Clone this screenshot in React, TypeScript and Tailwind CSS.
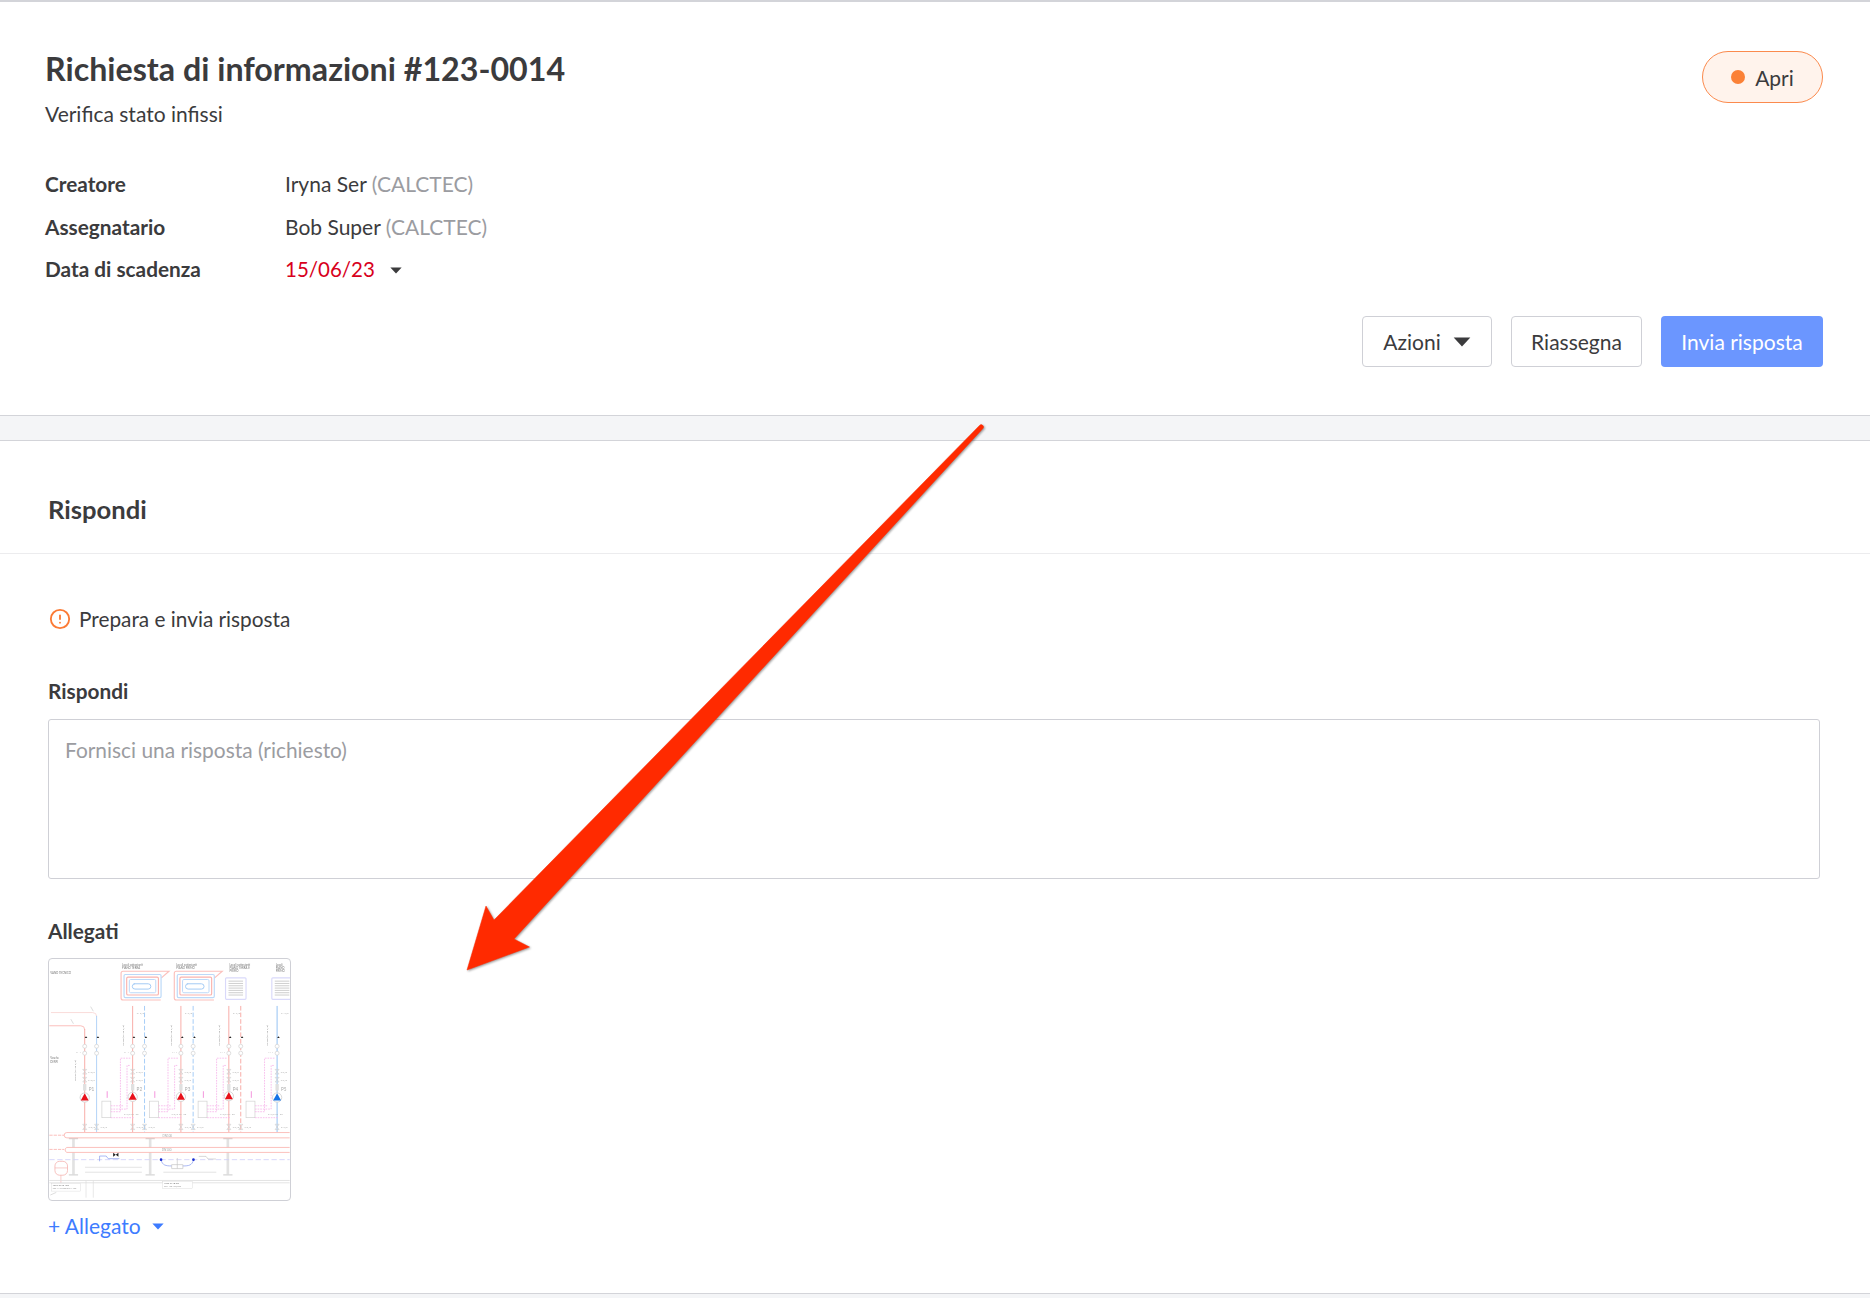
import React from "react";
import { CircleAlert } from "lucide-react";

const Caret = ({ className }: { className: string }) => (
  <svg viewBox="0 0 16 9" className={className} fill="currentColor">
    <path d="M0.5 0.5h15L8 8.5z" />
  </svg>
);

const Row = ({ label, children }: { label: string; children: React.ReactNode }) => (
  <div className="flex items-center h-[24px]">
    <div className="w-[240px] font-bold text-[20.8px]">{label}</div>
    <div className="flex items-center">{children}</div>
  </div>
);

// schema dell'allegato, coordinate prese dallo zoom 3x
const Schema = () => {
  const pipes = [
    { x: 162, top: 240, color: "#f79c96", dash: "" },
    { x: 198, top: 200, color: "#a3caf5", dash: "" },
    { x: 307, top: 170, color: "#f79c96", dash: "" },
    { x: 343, top: 170, color: "#94c2f5", dash: "14 6" },
    { x: 453, top: 170, color: "#f79c96", dash: "" },
    { x: 490, top: 170, color: "#94c2f5", dash: "14 6" },
    { x: 598, top: 170, color: "#f79c96", dash: "" },
    { x: 634, top: 170, color: "#f79c96", dash: "14 6" },
    { x: 744, top: 170, color: "#7fb6f2", dash: "" },
  ];
  const pumps = [
    { x: 162, y: 447, color: "#e8101a" },
    { x: 307, y: 445, color: "#e8101a" },
    { x: 453, y: 445, color: "#e8101a" },
    { x: 598, y: 443, color: "#e8101a" },
    { x: 744, y: 447, color: "#1473e6" },
  ];
  const boxes = [214, 358, 505, 650];
  const loops = [272, 433];
  const small = "Lato, sans-serif";

  return (
    <svg viewBox="55 28 727 729" className="w-full h-full blur-[0.6px]" fill="none">
      <g fontSize="8.5" fill="#777" fontFamily={small}>
        <text x={275} y={48}>Locali sottostanti<tspan x={275} dy="9">PIANO TERRA</tspan></text>
        <text x={439} y={48}>Locali sottostanti<tspan x={439} dy="9">PIANO PRIMO</tspan></text>
        <text x={600} y={48}>Locali sottostanti<tspan x={600} dy="9">PIANO TERRA E</tspan><tspan x={600} dy="9">PRIMO</tspan></text>
        <text x={740} y={48}>Locali<tspan x={740} dy="9">PIANO</tspan><tspan x={740} dy="9">PRIMO</tspan></text>
        <text x={58} y={73}>VANO TECNICO</text>
        <text x={58} y={332}>Vasche</text>
        <text x={58} y={342}>DMW</text>
      </g>

      {loops.map((x) => (
        <g key={x}>
          <path d={`M${x + 120} 152H${x + 6}a6 6 0 0 1-6-6V71a6 6 0 0 1 6-6H${x + 145}L${x + 122} 85`} stroke="#fbc0bc" strokeWidth="3.5" />
          <rect x={x + 9} y={75} width={112} height={70} rx="4" stroke="#bcd9f8" strokeWidth="3.5" />
          <rect x={x + 17} y={83} width={96} height={54} rx="4" stroke="#fab3ae" strokeWidth="3.5" />
          <rect x={x + 25} y={90} width={80} height={40} rx="4" stroke="#bcd9f8" strokeWidth="3" />
          <path d={`M${x + 38} 103h44a8 8 0 0 1 0 16h-40a8 8 0 0 1 0-16`} stroke="#a3caf5" strokeWidth="3" />
        </g>
      ))}
      {[588, 728].map((x) => (
        <g key={x}>
          <rect x={x} y={85} width={62} height={65} rx="3" stroke="#d9d9fa" strokeWidth="3.5" />
          {[95, 102, 109, 116, 123, 130, 137].map((y) => (
            <path key={y} d={`M${x + 9} ${y}h44`} stroke="#c4c4c4" strokeWidth="2.5" />
          ))}
        </g>
      ))}

      <path d="M55 230H150a12 12 0 0 1 12 12" stroke="#fab3ae" strokeWidth="2.5" />
      <path d="M60 190H186a12 12 0 0 1 12 12" stroke="#f9d6d3" strokeWidth="2.5" />
      <path d="M180 172l8 14M120 210l8 14" stroke="#ccc" strokeWidth="2" />

      {pipes.map((p) => (
        <g key={p.x}>
          <path d={`M${p.x} ${p.top}V552`} stroke={p.color} strokeWidth="2.5" strokeDasharray={p.dash} />
          <path d={`M${p.x + 4} 262l4 5h-8z`} fill="#222" />
          {[292, 313].map((y) => (
            <circle key={y} cx={p.x} cy={y} r="6" fill="#fff" stroke="#cfcfcf" strokeWidth="2" />
          ))}
          <path d={`M${p.x - 6} 528l12 16h-12l12-16z`} stroke="#cfcfcf" strokeWidth="2" />
          <text x={p.x + 11} y={540} fontSize="8" fill="#aaa" fontFamily={small}>1"1/2</text>
        </g>
      ))}

      {[307, 453, 598, 744].map((x) => (
        <text key={x} x={x + 12} y={194} fontSize="8" fill="#aaa" fontFamily={small}>1" 1/2</text>
      ))}

      {[162, 307, 453, 598, 744].map((x) => (
        <g key={x}>
          <text
            x={x - 26}
            y={x === 162 ? 396 : 290}
            fontSize="8"
            fill="#888"
            fontFamily={small}
            transform={`rotate(-90 ${x - 26} ${x === 162 ? 396 : 290})`}
          >
            DN50 (H=45 1/2)
          </text>
          <path d={`M${x - 6} 362l12 14h-12l12-14zM${x - 6} 386l12 14h-12l12-14z`} stroke="#cfcfcf" strokeWidth="2" />
          <text x={x + 10} y={373} fontSize="8" fill="#aaa" fontFamily={small}>1"1/2</text>
          <text x={x + 10} y={396} fontSize="8" fill="#aaa" fontFamily={small}>1"1/2</text>
          <rect x={x - 5} y={406} width={10} height={20} fill="#e0e0e0" />
          <text x={x - 26} y={312} fontSize="7" fill="#aaa" fontFamily={small}>M=1</text>
        </g>
      ))}

      {boxes.map((x) => (
        <g key={x}>
          <rect x={x} y={458} width={27} height={50} fill="#fff" stroke="#cfcfcf" strokeWidth="2" />
          <path d={`M${x + 16} 428v20`} stroke="#f27fd6" strokeWidth="2.5" />
          <path
            d={`M${x + 27} 490h29V328h30M${x + 27} 482h49V350h10M${x + 27} 472h40M${x + 27} 508h70`}
            stroke="#f6b4e9"
            strokeWidth="2.5"
            strokeDasharray="5 3"
          />
          <text x={x + 66} y={500} fontSize="8" fill="#aaa" fontFamily={small}>1"1/2 Kv=25</text>
        </g>
      ))}

      {pumps.map((p, i) => (
        <g key={p.x}>
          <circle cx={p.x} cy={p.y} r="14" fill="#fff" stroke="#cfcfcf" strokeWidth="2.5" />
          <path d={`M${p.x} ${p.y - 13}L${p.x + 12} ${p.y + 9}H${p.x - 12}z`} fill={p.color} />
          <text x={p.x + 12} y={426} fontSize="14" fill="#aaa" fontFamily={small}>P{i + 1}</text>
        </g>
      ))}

      {[128, 360, 595].map((x) => (
        <g key={x}>
          <path d={`M${x} 570V680`} stroke="#e2e2e2" strokeWidth="8" />
          <path d={`M${x - 14} 571h28M${x - 14} 681h28`} stroke="#d6d6d6" strokeWidth="4" />
        </g>
      ))}
      <path d="M55 561h45M55 604h45" stroke="#fab3ae" strokeWidth="2.5" strokeDasharray="10 3" />
      <path d="M782 553H108a8 8 0 0 0 0 16H782" fill="#fff" stroke="#fab3ae" strokeWidth="2.5" />
      <path d="M782 598H108a8 8 0 0 0 0 15H782" fill="#fff" stroke="#fab3ae" strokeWidth="2.5" />
      <text x={397} y={565} fontSize="9" fill="#aaa" fontFamily={small}>DN100</text>
      <text x={395} y={609} fontSize="9" fill="#aaa" fontFamily={small}>DN100</text>
      <path d="M55 635H782" stroke="#d0d0fa" strokeWidth="2.5" strokeDasharray="16 8" />

      <path d="M207 640v-16h20l6 8h34M393 636c4 16 14 18 32 18M491 636c-4 16-14 18-32 18" stroke="#7f95ee" strokeWidth="2" />
      <path d="M248 614l8 6-8 6zM264 614l-8 6 8 6z" fill="#222" />
      <circle cx="393" cy="635" r="4" fill="#1a2fd0" />
      <circle cx="491" cy="635" r="4" fill="#1a2fd0" />
      <path d="M425 650h34v12h-34zM442 630v32M507 625h22l6 8h24" stroke="#c4c4c4" strokeWidth="2" />
      <path d="M163 658H335M163 673H335M400 673H560" stroke="#d6d6d6" strokeWidth="2" />
      <rect x={72} y={640} width={38} height={42} rx="14" fill="#fff" stroke="#f5b5b1" strokeWidth="2.5" />
      <path d="M72 660h38M90 682v24" stroke="#f5b5b1" strokeWidth="2" />

      <path d="M55 698H782M55 705H782" stroke="#dedede" strokeWidth="2.5" />
      <path d="M166 698V750M188 698V750" stroke="#dedede" strokeWidth="2" />
      <rect x={62} y={707} width={88} height={23} fill="#fff" stroke="#ccc" />
      <rect x={398} y={700} width={90} height={22} fill="#fff" stroke="#ccc" />
      <g fontFamily={small}>
        <text x={65} y={716} fontSize="7.5" fill="#777">Vaso CMB 100</text>
        <text x={65} y={725} fontSize="6.5" fill="#999">cod. 112.2700.0.041.100</text>
        <text x={402} y={709} fontSize="7.5" fill="#777">Vaso CMB 80</text>
        <text x={402} y={718} fontSize="6.5" fill="#999">cod. 198.170/500</text>
      </g>
      <path d="M58 742l18-8" stroke="#ccc" strokeWidth="2" />
    </svg>
  );
};

const App = () => {
  return (
    <div className="relative h-[1298px] overflow-hidden bg-[#f4f5f7] text-[21px] leading-[24px] text-[#3b3b3d] font-['Lato',sans-serif]">
      <section className="bg-white border-t-2 border-b border-[#d3d4d9] h-[416px] pl-[45px] pr-[47px] pt-[47px]">
        <div className="flex justify-between items-start">
          <div>
            <h1 className="text-[32.2px] leading-[40px] font-bold">Richiesta di informazioni #123-0014</h1>
            <p className="mt-[13px]">Verifica stato infissi</p>
          </div>
          <div className="mt-[2px] flex items-center gap-[11px] h-[52px] w-[121px] justify-center rounded-full border border-[#fb8a4d] bg-[#fff3ec]">
            <span className="w-[14px] h-[14px] rounded-full bg-[#fb8137]" />
            <span className="mt-[2px] -ml-[1px]">Apri</span>
          </div>
        </div>

        <div className="mt-[46px] flex flex-col gap-[18.5px]">
          <Row label="Creatore">
            Iryna Ser&nbsp;<span className="text-[#9b9ca1]">(CALCTEC)</span>
          </Row>
          <Row label="Assegnatario">
            Bob Super&nbsp;<span className="text-[#9b9ca1]">(CALCTEC)</span>
          </Row>
          <Row label="Data di scadenza">
            <span className="text-[#d8001c] text-[20.5px]">15/06/23</span>
            <Caret className="ml-[15px] w-[12px] h-[7px] mt-[2px] text-[#3b3b3d]" />
          </Row>
        </div>

        <div className="mt-[35px] flex justify-end gap-[19px]">
          <button className="h-[51px] w-[130px] flex items-center justify-center gap-[12px] bg-white border border-[#cfd0d6] rounded-[4px]">
            Azioni
            <Caret className="w-[18px] h-[10px] text-[#3b3b3d]" />
          </button>
          <button className="h-[51px] w-[131px] bg-white border border-[#cfd0d6] rounded-[4px]">Riassegna</button>
          <button className="h-[51px] w-[162px] bg-[#6b96ff] text-white rounded-[4px]">Invia risposta</button>
        </div>
      </section>

      <section className="mt-[24px] bg-white border-t border-b border-[#d3d4d9] h-[854px]">
        <div className="h-[113px] pl-[48px] flex items-end pb-[29px] border-b border-[#ececee]">
          <h2 className="text-[25.6px] leading-[30px] font-bold">Rispondi</h2>
        </div>

        <div className="pl-[48px] pr-[50px]">
          <div className="mt-[53px] flex items-center gap-[8px] pl-[1px] text-[20.8px]">
            <CircleAlert size={22} strokeWidth={2} className="text-[#fb7a35]" />
            <span>Prepara e invia risposta</span>
          </div>

          <div className="mt-[48px] font-bold text-[20.8px]">Rispondi</div>
          <textarea
            readOnly
            placeholder="Fornisci una risposta (richiesto)"
            className="mt-[16px] block w-full h-[160px] px-[16px] py-[18px] border border-[#cfd0d6] rounded-[3px] resize-none outline-none text-[20.9px] placeholder:text-[#9b9ca1]"
          />

          <div className="mt-[40px] font-bold text-[20.8px]">Allegati</div>
          <div className="mt-[15px] w-[243px] h-[243px] rounded-[4px] border border-[#cfd0d6] overflow-hidden bg-white">
            <Schema />
          </div>
          <div className="mt-[13px] flex items-center text-[#3d7bff]">
            + Allegato
            <Caret className="ml-[11px] w-[12px] h-[7px] text-[#3d7bff]" />
          </div>
        </div>
      </section>

      {/* freccia di annotazione sopra la pagina */}
      <svg className="absolute left-0 top-0 w-[1870px] h-[1298px] pointer-events-none drop-shadow-[1px_1px_1px_rgba(0,0,0,0.4)]" viewBox="0 0 1870 1298">
        <path
          d="M979.5 425.5a2.2 2.2 0 0 1 3.4 3L514 939l15.5 8L467 970l19-64 8 14z"
          fill="#ff2a00"
          stroke="#ff2a00"
          strokeWidth="0.5"
        />
      </svg>
    </div>
  );
};

export default App;
